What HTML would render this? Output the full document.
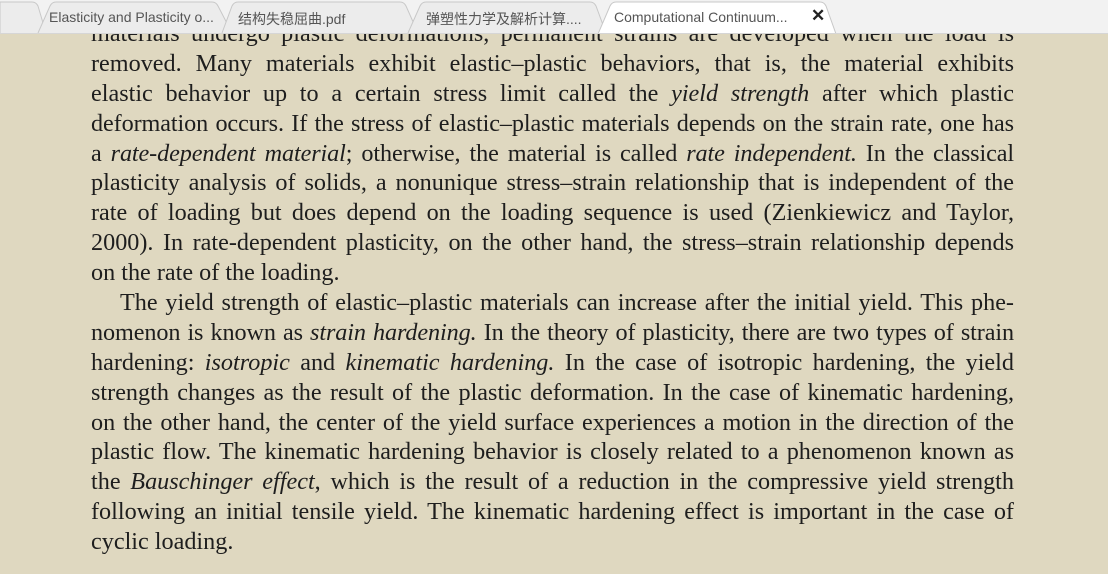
<!DOCTYPE html>
<html><head><meta charset="utf-8"><style>
html,body{margin:0;padding:0;width:1108px;height:574px;overflow:hidden;background:#dfd8c0;}
#tabs{position:absolute;left:0;top:0;width:1108px;height:33px;background:#f2f2f2;border-bottom:1px solid #d6d6d6;z-index:2;overflow:hidden}
.t{position:absolute;top:9px;font:14px "Liberation Sans","Noto Sans CJK SC",sans-serif;color:#555;white-space:nowrap}
#txt{position:absolute;left:91px;top:19px;width:923px;font:24.2px/29.9px "Liberation Serif",serif;color:#1e1e1e}
.l{text-align:justify;text-align-last:justify;white-space:nowrap;height:29.9px}
.l.e{text-align-last:left}
.l.s{word-spacing:-1.5px;letter-spacing:-0.1px}
.i{padding-left:29px}
</style></head><body>
<div id="tabs">
<svg width="1108" height="34" style="position:absolute;left:0;top:0">
<path d="M0 33 L0 2 L32 2 Q36 2 38 6 L46 33" fill="#ececec" stroke="#c8c8c8"/>
<path d="M38 33 L50 6 Q52 2 56 2 L212 2 Q216 2 218 6 L232 33" fill="#ececec" stroke="#c8c8c8"/>
<path d="M222 33 L232 6 Q234 2 238 2 L400 2 Q404 2 406 6 L418 33" fill="#ececec" stroke="#c8c8c8"/>
<path d="M408 33 L420 6 Q422 2 426 2 L590 2 Q594 2 596 6 L606 33" fill="#ececec" stroke="#c8c8c8"/>
<path d="M598 34 L610 6 Q612 2 616 2 L820 2 Q824 2 826 6 L836 34" fill="#ffffff" stroke="#c8c8c8"/>
</svg>
<div class="t" style="left:49px">Elasticity and Plasticity o...</div>
<div class="t" style="left:238px">结构失稳屈曲.pdf</div>
<div class="t" style="left:426px">弹塑性力学及解析计算....</div>
<div class="t" style="left:614px">Computational Continuum...</div>
<div class="t" style="left:811px;top:6px;font-size:17px;font-weight:bold;color:#222">✕</div>
</div>
<div id="txt">
<div class="l">materials undergo plastic deformations, permanent strains are developed when the load is</div>
<div class="l">removed. Many materials exhibit elastic–plastic behaviors, that is, the material exhibits</div>
<div class="l">elastic behavior up to a certain stress limit called the <i>yield strength</i> after which plastic</div>
<div class="l s">deformation occurs. If the stress of elastic–plastic materials depends on the strain rate, one has</div>
<div class="l s">a <i>rate-dependent material</i>; otherwise, the material is called <i>rate independent.</i> In the classical</div>
<div class="l">plasticity analysis of solids, a nonunique stress–strain relationship that is independent of the</div>
<div class="l">rate of loading but does depend on the loading sequence is used (Zienkiewicz and Taylor,</div>
<div class="l">2000). In rate-dependent plasticity, on the other hand, the stress–strain relationship depends</div>
<div class="l e">on the rate of the loading.</div>
<div class="l i">The yield strength of elastic–plastic materials can increase after the initial yield. This phe-</div>
<div class="l s">nomenon is known as <i>strain hardening.</i> In the theory of plasticity, there are two types of strain</div>
<div class="l">hardening: <i>isotropic</i> and <i>kinematic hardening.</i> In the case of isotropic hardening, the yield</div>
<div class="l">strength changes as the result of the plastic deformation. In the case of kinematic hardening,</div>
<div class="l">on the other hand, the center of the yield surface experiences a motion in the direction of the</div>
<div class="l">plastic flow. The kinematic hardening behavior is closely related to a phenomenon known as</div>
<div class="l">the <i>Bauschinger effect</i>, which is the result of a reduction in the compressive yield strength</div>
<div class="l">following an initial tensile yield. The kinematic hardening effect is important in the case of</div>
<div class="l e">cyclic loading.</div>
</div>
</body></html>
